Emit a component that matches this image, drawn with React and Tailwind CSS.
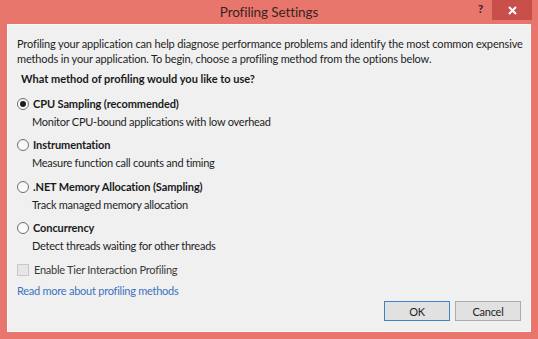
import React from "react";

function Radio({ checked }) {
  return (
    <span className="w-[12px] h-[12px] rounded-full border border-[#6e6e6e] bg-gradient-to-b from-[#f4f4f4] to-[#ffffff] flex items-center justify-center shrink-0">
      {checked && <span className="w-[6px] h-[6px] rounded-full bg-[#1e1e1e]" />}
    </span>
  );
}

function Option({ checked, title, desc, className }) {
  return (
    <div className={"flex flex-col " + (className || "")}>
      <div className="flex items-center gap-[4px] h-[15px]">
        <Radio checked={checked} />
        <span className="font-bold text-[#1a1a1a] tracking-[-0.1px]">{title}</span>
      </div>
      <div className="pl-[15px] mt-[3px] h-[15px]">{desc}</div>
    </div>
  );
}

export default function App() {
  return (
    <div
      className="w-[538px] h-[339px] bg-[#e8766c] flex flex-col text-[11px] leading-[15px] tracking-[-0.25px] text-[#1e1e1e] overflow-hidden"
      style={{ fontFamily: 'Lato, "Open Sans", sans-serif' }}
    >
      <div className="h-[24px] relative flex items-center justify-center">
        <span className="text-[13.5px] tracking-[-0.1px] text-[#3a2423] pt-[1px]">Profiling Settings</span>
        <div className="absolute right-[6px] top-0 flex items-start">
          <span className="text-[12px] font-bold text-[#3a2423] mr-[9px] mt-[1px]">?</span>
          <div className="w-[40px] h-[20px] bg-[#c9504a] flex items-center justify-center">
            <svg width="9" height="9" viewBox="0 0 9 9">
              <path d="M1 1 L8 8 M8 1 L1 8" stroke="#ffffff" strokeWidth="2" />
            </svg>
          </div>
        </div>
      </div>
      <div className="mx-[7px] h-[308px] bg-[#f0f0f0] border border-[#fafafa] pl-[9px] pr-[8px] pt-[11px] flex flex-col">
        <p className="whitespace-nowrap tracking-[-0.15px]">
          Profiling your application can help diagnose performance problems and identify the most common expensive
          <br />
          methods in your application. To begin, choose a profiling method from the options below.
        </p>
        <div className="font-bold mt-[5px] pl-[4px] tracking-[0px] text-[#1a1a1a]">What method of profiling would you like to use?</div>
        <Option className="mt-[10px]" checked title="CPU Sampling (recommended)" desc="Monitor CPU-bound applications with low overhead" />
        <Option className="mt-[8px]" title="Instrumentation" desc="Measure function call counts and timing" />
        <Option className="mt-[9px]" title=".NET Memory Allocation (Sampling)" desc="Track managed memory allocation" />
        <Option className="mt-[8px]" title="Concurrency" desc="Detect threads waiting for other threads" />
        <div className="flex items-center gap-[5px] mt-[9px] h-[15px]">
          <span className="w-[12px] h-[12px] border border-[#c8c8c8] bg-[#e6e6e6] shrink-0" />
          <span className="text-[#3a3a3a]">Enable Tier Interaction Profiling</span>
        </div>
        <div className="mt-[6px] text-[#3c72bf]">Read more about profiling methods</div>
        <div className="flex justify-end gap-[5px] mt-[3px] pr-[1px]">
          <button className="w-[66px] h-[20px] bg-[#e1e1e1] border border-[#3c86c8] text-[11px] leading-[15px] text-[#1e1e1e]">OK</button>
          <button className="w-[66px] h-[20px] bg-[#e1e1e1] border border-[#adadad] text-[11px] leading-[15px] text-[#1e1e1e]">Cancel</button>
        </div>
      </div>
    </div>
  );
}
